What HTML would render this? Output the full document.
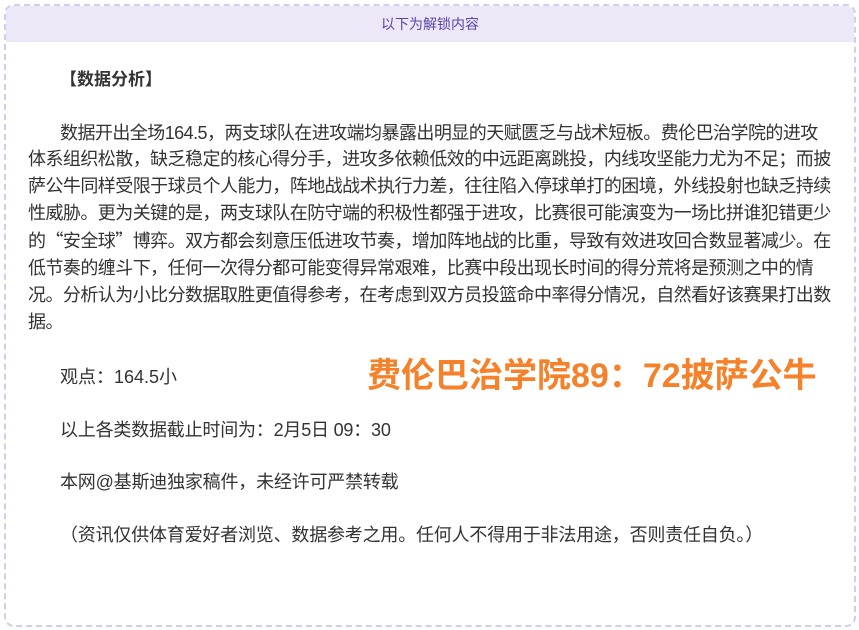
<!DOCTYPE html>
<html><head><meta charset="utf-8"><style>
body{margin:0;width:859px;height:630px;background:#fff;font-family:"Liberation Sans","Noto Sans CJK SC",sans-serif;color:#333;position:relative;overflow:hidden}
.box{position:absolute;left:4px;top:4px;width:848px;height:619px;border:2px dashed #d2cdea;border-radius:10px;overflow:hidden}
.hd{height:36px;background:#ece8f8;color:#5b43a8;font-size:14px;text-align:center;line-height:36px}
.p{position:absolute;left:28px;width:816px;font-size:18px;line-height:26.9px;margin:0;letter-spacing:-0.55px;white-space:nowrap}
.in{text-indent:32px}
.q{font-family:"Noto Sans CJK SC",sans-serif}
</style></head><body>
<div class="box"><div class="hd">以下为解锁内容</div></div>
<p class="p in" style="top:67px;font-weight:bold;font-size:17px;letter-spacing:0">【数据分析】</p>
<p class="p in" style="top:119.5px">数据开出全场164.5，两支球队在进攻端均暴露出明显的天赋匮乏与战术短板。费伦巴治学院的进攻<br>体系组织松散，缺乏稳定的核心得分手，进攻多依赖低效的中远距离跳投，内线攻坚能力尤为不足；而披<br>萨公牛同样受限于球员个人能力，阵地战战术执行力差，往往陷入停球单打的困境，外线投射也缺乏持续<br>性威胁。更为关键的是，两支球队在防守端的积极性都强于进攻，比赛很可能演变为一场比拼谁犯错更少<br>的<span class="q">“</span>安全球<span class="q">”</span>博弈。双方都会刻意压低进攻节奏，增加阵地战的比重，导致有效进攻回合数显著减少。在<br>低节奏的缠斗下，任何一次得分都可能变得异常艰难，比赛中段出现长时间的得分荒将是预测之中的情<br>况。分析认为小比分数据取胜更值得参考，在考虑到双方员投篮命中率得分情况，自然看好该赛果打出数<br>据。</p>
<p class="p in" style="top:364px;letter-spacing:0">观点：164.5小</p>
<div style="position:absolute;left:367px;top:354px;font-size:34px;font-weight:bold;color:#f5822a;line-height:44px;white-space:nowrap">费伦巴治学院89：72披萨公牛</div>
<p class="p in" style="top:417px;letter-spacing:-0.2px">以上各类数据截止时间为：2月5日 09：30</p>
<p class="p in" style="top:469px;letter-spacing:-0.2px">本网@基斯迪独家稿件，未经许可严禁转载</p>
<p class="p" style="top:522px;left:60px;letter-spacing:-0.2px">（资讯仅供体育爱好者浏览、数据参考之用。任何人不得用于非法用途，否则责任自负。）</p>
</body></html>
